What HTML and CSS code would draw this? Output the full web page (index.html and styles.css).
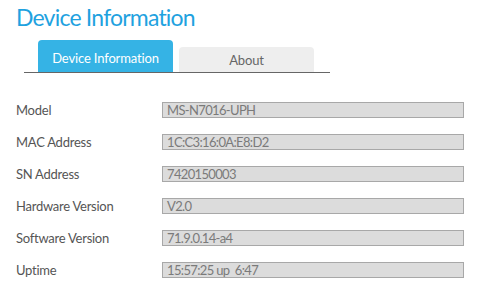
FILE: index.html
```html
<!DOCTYPE html>
<html>
<head>
<meta charset="utf-8">
<link rel="stylesheet" href="styles.css">
</head>
<body>
<h1 class="title">Device Information</h1>
<div class="tabs">
  <div class="tab active">Device Information</div>
  <div class="tab">About</div>
</div>
<div class="info">
  <div class="label">Model</div><div class="field">MS-N7016-UPH</div>
  <div class="label">MAC Address</div><div class="field">1C:C3:16:0A:E8:D2</div>
  <div class="label">SN Address</div><div class="field">7420150003</div>
  <div class="label">Hardware Version</div><div class="field">V2.0</div>
  <div class="label">Software Version</div><div class="field">71.9.0.14-a4</div>
  <div class="label">Uptime</div><div class="field">15:57:25 up&nbsp; 6:47</div>
</div>
</body>
</html>
```
FILE: styles.css
```css
html, body {
  margin: 0;
  padding: 0;
  background: #ffffff;
  font-family: Lato, "Open Sans", sans-serif;
}
.title {
  margin: 3px 0 0 16px;
  font-size: 23px;
  line-height: 28px;
  letter-spacing: -0.8px;
  font-weight: normal;
  color: #1fa2df;
}
.tabs {
  display: flex;
  align-items: flex-end;
  gap: 6px;
  margin: 9px 0 0 24px;
  padding-left: 14px;
  width: 292px;
  height: 32px;
  border-bottom: 1px solid #666666;
}
.tab {
  box-sizing: border-box;
  width: 135px;
  height: 25px;
  padding-top: 5px;
  border-radius: 4px 4px 0 0;
  background: #eeeeee;
  color: #666666;
  font-size: 13px;
  line-height: 16px;
  letter-spacing: -0.15px;
  text-align: center;
}
.tab.active {
  height: 32px;
  padding-top: 10px;
  background: #35b3e5;
  color: #ffffff;
}
.info {
  display: grid;
  grid-template-columns: 146px 302px;
  row-gap: 16px;
  margin: 29px 0 0 16px;
  font-size: 13px;
  line-height: 16px;
}
.label {
  color: #555555;
  height: 16px;
  letter-spacing: -0.25px;
}
.field {
  box-sizing: border-box;
  height: 16px;
  border: 1px solid #a8a8a8;
  background: #dcdcdc;
  color: #7a7a7a;
  padding-left: 4px;
  line-height: 14px;
  letter-spacing: -0.65px;
  white-space: pre;
}
```
